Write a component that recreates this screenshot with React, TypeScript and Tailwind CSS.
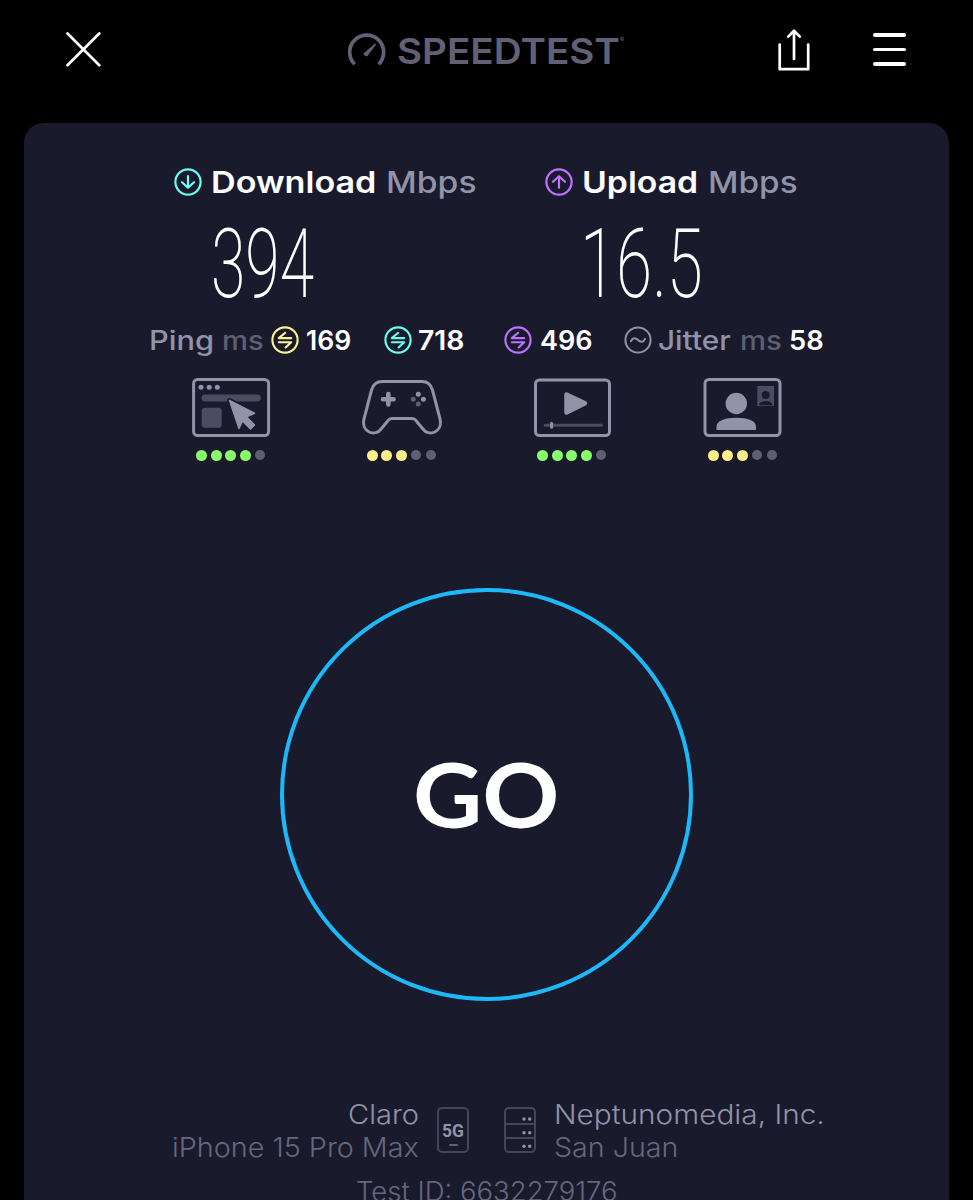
import { useLayoutEffect, useRef, useState } from "react";
import type { ReactNode } from "react";

function FitText({ className, children }: { className: string; children: ReactNode }) {
  const box = useRef<HTMLDivElement>(null);
  const text = useRef<HTMLSpanElement>(null);
  const [scale, setScale] = useState(1);

  useLayoutEffect(() => {
    if (box.current && text.current) {
      setScale(box.current.clientWidth / text.current.offsetWidth);
    }
  }, []);

  return (
    <div ref={box} className={`shrink-0 whitespace-nowrap ${className}`}>
      <span ref={text} className="inline-block origin-left" style={{ transform: `scaleX(${scale})` }}>
        {children}
      </span>
    </div>
  );
}

// Circle with an arrow for download / upload
function ArrowIcon({ up = false, className }: { up?: boolean; className: string }) {
  return (
    <svg viewBox="0 0 28 28" className={`size-7 shrink-0 ${className}`} fill="none" stroke="currentColor" strokeWidth="2.2" strokeLinecap="round" strokeLinejoin="round">
      <circle cx="14" cy="14" r="12.6" />
      {up ? <path d="M14 19.8V8.8M8 13.8l6-5.6 6 5.6" /> : <path d="M14 8.2v11M8 14.2l6 5.6 6-5.6" />}
    </svg>
  );
}

// Circle with two opposite half arrows, one per ping type
function PingIcon({ className }: { className: string }) {
  return (
    <svg viewBox="0 0 28 28" className={`size-7 shrink-0 ${className}`} fill="none" stroke="currentColor" strokeWidth="2.1" strokeLinecap="round" strokeLinejoin="round">
      <circle cx="14" cy="14" r="12.6" />
      <path d="M20.2 12.1H7.8l6.4-5.3M7.8 16.2h12.4l-5.6 5.3" />
    </svg>
  );
}

// Five dot rating under each activity
function Rating({ score, color, className }: { score: number; color: string; className: string }) {
  return (
    <div className={`flex h-3 items-center gap-[3.7px] ${className}`}>
      {[1, 2, 3, 4, 5].map((n) => (
        <span key={n} className="flex size-[11px] items-center justify-center">
          <span className={n <= score ? `size-[11px] shrink-0 rounded-full ${color}` : "size-[9.6px] shrink-0 rounded-full bg-[#5e5f74]"} />
        </span>
      ))}
    </div>
  );
}

export default function App() {
  return (
    <div className="h-[1200px] w-[973px] overflow-hidden bg-black font-['Inter',sans-serif] text-white">

      {/* Top bar */}
      <header className="flex h-[123px] items-start">
        <svg viewBox="0 0 36 36" className="mt-[31px] ml-[65px] size-9" fill="none" stroke="currentColor" strokeWidth="2.7" strokeLinecap="round">
          <path d="M2.5 2.5 34.3 34.3M34.3 2.5 2.5 34.3" />
        </svg>

        {/* Logo */}
        <div className="mt-[33px] ml-[246px] flex text-[#616075]">
          <svg viewBox="0 0 40 34" className="h-[34px] w-10" fill="none">
            <path d="M7.7 31.2A17 17 0 1 1 31.6 31.2" stroke="currentColor" strokeWidth="3.7" />
            <path d="M28.3 11.2 20 22.4Q18 22.8 17.2 20.8Z" fill="currentColor" stroke="currentColor" strokeWidth="1.5" strokeLinejoin="round" />
          </svg>
          <FitText className="ml-[10px] w-[223px] text-[36px] leading-[36px] font-semibold">SPEEDTEST</FitText>
          <span className="mt-[3px] text-[6px] leading-[8px]">®</span>
        </div>

        <div className="flex-1" />
        <svg viewBox="0 0 34 44" className="mt-[28px] h-11 w-[34px] shrink-0" fill="none" stroke="currentColor" strokeWidth="2.7" strokeLinecap="round" strokeLinejoin="round">
          <path d="M2.7 16.5V41.2H31.2V16.5M17 31V3M11.2 8.6 17 2.8l5.8 5.8" />
        </svg>
        <div className="mt-[33px] mr-[67px] ml-[62px] flex w-[33px] flex-col gap-[11px]">
          <span className="h-[3.5px] rounded-full bg-white" />
          <span className="h-[3.5px] rounded-full bg-white" />
          <span className="h-[3.5px] rounded-full bg-white" />
        </div>
      </header>

      <main className="mx-6 h-[1100px] rounded-[20px] bg-[#1a1a2d] pt-[39px]">

        {/* Download and upload results */}
        <section className="flex pl-[150px]">
          <div className="w-[371px]">
            <div className="flex h-10 items-center text-[30px] leading-10">
              <ArrowIcon className="text-[#6afff3]" />
              <FitText className="ml-[9px] w-[165px] font-semibold">Download</FitText>
              <FitText className="ml-[10px] w-[91px] font-medium text-[#9193a8]">Mbps</FitText>
            </div>
            <FitText className="mt-[12px] ml-[37px] w-[103px] font-['Roboto'] text-[97px] leading-[100px] font-extralight">394</FitText>
          </div>
          <div>
            <div className="flex h-10 items-center text-[30px] leading-10">
              <ArrowIcon up className="text-[#bf71ff]" />
              <FitText className="ml-[9px] w-[116px] font-semibold">Upload</FitText>
              <FitText className="ml-[10px] w-[90px] font-medium text-[#9193a8]">Mbps</FitText>
            </div>
            <FitText className="mt-[12px] ml-[35px] w-[123px] font-['Roboto'] text-[97px] leading-[100px] font-extralight">16.5</FitText>
          </div>
        </section>

        {/* Ping and jitter */}
        <section className="mt-[6px] flex h-10 items-center pl-[125px] text-[26.5px] leading-10 font-semibold">
          <FitText className="w-[65px] font-medium text-[#9193a8]">Ping</FitText>
          <FitText className="ml-[8px] w-[42px] font-medium text-[#5e5f74]">ms</FitText>
          <PingIcon className="ml-[7px] text-[#fff38e]" />
          <FitText className="ml-[7px] w-[45px]">169</FitText>
          <PingIcon className="ml-[33px] text-[#6afff3]" />
          <FitText className="ml-[6px] w-[46px]">718</FitText>
          <PingIcon className="ml-[40px] text-[#bf71ff]" />
          <FitText className="ml-[8px] w-[53px]">496</FitText>
          <svg viewBox="0 0 28 28" className="ml-[31px] size-7 shrink-0 text-[#9193a8]" fill="none" stroke="currentColor" strokeWidth="2" strokeLinecap="round">
            <circle cx="14" cy="14" r="12.6" />
            <path d="M7 15.2C8.5 11.5 11.3 11.4 14 14s5.5 2.4 7-1.2" />
          </svg>
          <FitText className="ml-[6px] w-[73px] font-medium text-[#9193a8]">Jitter</FitText>
          <FitText className="ml-[9px] w-[42px] font-medium text-[#5e5f74]">ms</FitText>
          <FitText className="ml-[7px] w-[35px]">58</FitText>
        </section>

        {/* Activity ratings */}
        <section className="mt-[17px] flex pl-[167px]">
          <div className="w-[171px]">
            <svg viewBox="0 0 80 62" className="h-[62px] w-20" fill="none">
              <rect x="2.6" y="2.5" width="75" height="56" rx="4" stroke="#9193a8" strokeWidth="3" />
              <g fill="#9193a8">
                <circle cx="10" cy="10.3" r="2.5" />
                <circle cx="18.2" cy="10.3" r="2.5" />
                <circle cx="26.3" cy="10.3" r="2.5" />
              </g>
              <rect x="10.7" y="17.5" width="59" height="7" rx="3" fill="#4b4c61" />
              <rect x="10.7" y="30.7" width="20" height="20" rx="3" fill="#4b4c61" />
              <path d="M38.5 23.5 63.5 36.2 55.5 39.8 63.5 48 59.5 52 51.5 44 48 51.5Z" fill="#9193a8" stroke="#1a1a2d" strokeWidth="5" strokeLinejoin="round" />
              <path d="M38.5 23.5 63.5 36.2 55.5 39.8 63.5 48 59.5 52 51.5 44 48 51.5Z" fill="#9193a8" stroke="#9193a8" strokeWidth="1.5" strokeLinejoin="round" />
            </svg>
            <Rating score={4} color="bg-[#86ff6b]" className="mt-[10px] ml-[5px]" />
          </div>
          <div className="w-[171px]">
            <svg viewBox="0 0 80 62" className="h-[62px] w-20" fill="none">
              <path d="M20 4.5H60C66 4.5 69 8 70.5 13L78 42C81 55 67 60.5 60.5 51.5L53.5 43Q52 41.5 50 41.5H30Q28 41.5 26.5 43L19.5 51.5C13 60.5-1 55 2 42L9.5 13C11 8 14 4.5 20 4.5Z" stroke="#9193a8" strokeWidth="3" strokeLinejoin="round" />
              <path d="M26.3 17V27.5M21 22.2H31.6" stroke="#9193a8" strokeWidth="4.6" strokeLinecap="round" />
              <circle cx="56.3" cy="17.3" r="2.5" fill="#9193a8" />
              <circle cx="61.4" cy="22.2" r="2.5" fill="#9193a8" />
              <circle cx="51.2" cy="22.2" r="2.5" fill="#5e5f74" />
              <circle cx="56.3" cy="27" r="2.5" fill="#5e5f74" />
            </svg>
            <Rating score={3} color="bg-[#fff08a]" className="mt-[10px] ml-[4.500px]" />
          </div>
          <div className="w-[169px]">
            <svg viewBox="0 0 80 62" className="h-[62px] w-20" fill="none">
              <rect x="2.5" y="3" width="74" height="55.5" rx="4" stroke="#9193a8" strokeWidth="3" />
              <path d="M33.5 17.5V35.5L52 26.3Z" fill="#9193a8" stroke="#9193a8" strokeWidth="4.5" strokeLinejoin="round" />
              <path d="M12.2 48.3H68.5" stroke="#4b4c61" strokeWidth="3" strokeLinecap="round" />
              <path d="M18.6 46.3V50.3" stroke="#9193a8" strokeWidth="3" strokeLinecap="round" />
            </svg>
            <Rating score={4} color="bg-[#86ff6b]" className="mt-[10px] ml-[4px]" />
          </div>
          <div>
            <svg viewBox="0 0 80 62" className="h-[62px] w-20" fill="none">
              <rect x="3" y="2.5" width="75" height="56" rx="4" stroke="#9193a8" strokeWidth="3" />
              <circle cx="34.3" cy="26.5" r="10.7" fill="#9193a8" />
              <path d="M14.5 53V49.5C14.5 43.5 23 40.7 34.3 40.7S54 43.5 54 49.5V53Z" fill="#9193a8" />
              <rect x="55.3" y="9" width="16.7" height="20" fill="#4b4c61" />
              <circle cx="63.6" cy="18" r="4" fill="#1a1a2d" />
              <path d="M57 28.3C57 22.6 70.3 22.6 70.3 28.3Z" fill="#1a1a2d" />
            </svg>
            <Rating score={3} color="bg-[#fff08a]" className="mt-[10px] ml-[5.500px]" />
          </div>
        </section>

        {/* Start button */}
        <button className="mx-auto mt-[127px] flex size-[413px] items-center justify-center rounded-full border-4 border-[#1cb8f8]">
          <FitText className="mt-[-2px] w-[147px] text-left font-['Lato'] text-[89px] leading-[100px] font-bold">GO</FitText>
        </button>

        {/* Connection details */}
        <footer className="mt-[97px] text-[27px] leading-[33px] font-light">
          <div className="flex">
            <div className="flex w-[395px] flex-col items-end text-[#9193a8]">
              <FitText className="w-[71px]">Claro</FitText>
              <FitText className="w-[247px] text-[#66677c]">iPhone 15 Pro Max</FitText>
            </div>
            <div className="mt-[9px] ml-[18px] flex h-[46px] w-8 flex-col items-center rounded-[5px] border-2 border-[#45465b] pt-[12px] text-[#9193a8]">
              <FitText className="w-[22px] font-['Roboto'] text-[19px] leading-[19px] font-bold">5G</FitText>
              <span className="mt-[4px] h-[2px] w-[9px] shrink-0 rounded-full bg-[#5e5f74]" />
            </div>
            <svg viewBox="0 0 32 46" className="mt-[9px] ml-[35px] h-[46px] w-8" fill="none">
              <path d="M1 17H31M1 31H31" stroke="#45465b" strokeWidth="2" />
              <rect x="1" y="1" width="30" height="44" rx="4" stroke="#45465b" strokeWidth="2" />
              <g fill="#9193a8">
                <circle cx="20" cy="12" r="1.7" /><circle cx="25.7" cy="12" r="1.7" />
                <circle cx="20" cy="25.7" r="1.7" /><circle cx="25.7" cy="25.7" r="1.7" />
                <circle cx="20" cy="39.3" r="1.7" /><circle cx="25.7" cy="39.3" r="1.7" />
              </g>
            </svg>
            <div className="ml-[18px] text-[#9193a8]">
              <FitText className="w-[271px]">Neptunomedia, Inc.</FitText>
              <FitText className="w-[124px] text-[#66677c]">San Juan</FitText>
            </div>
          </div>
          <FitText className="mx-auto mt-[11px] w-[262px] text-[#66677c]">Test ID: 6632279176</FitText>
        </footer>
      </main>
    </div>
  );
}
